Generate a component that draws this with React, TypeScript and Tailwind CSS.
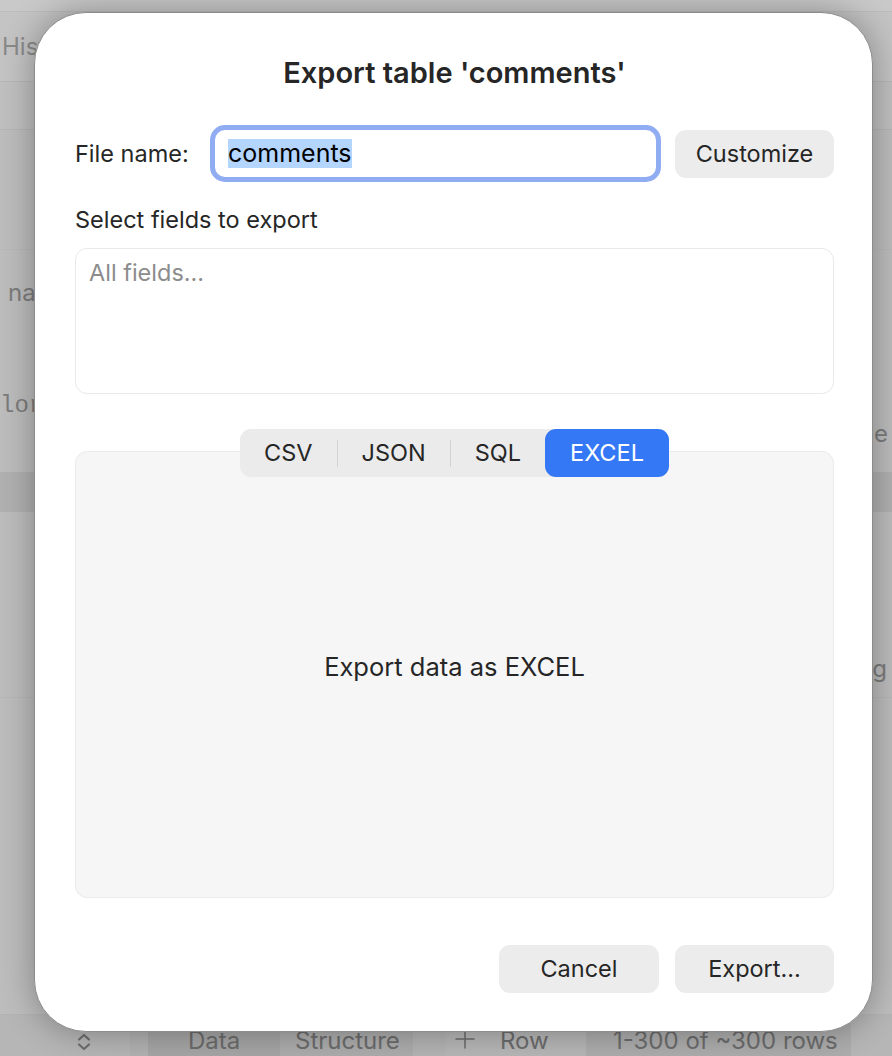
import React from 'react';

const tabs = ['CSV', 'JSON', 'SQL', 'EXCEL'];

// small up/down stepper glyph in the status bar
const UpDown = () => (
    <svg width="16" height="20" viewBox="0 0 16 20" fill="none" stroke="#6e6e6e" strokeWidth="2.2" strokeLinecap="round" strokeLinejoin="round">
        <path d="M3 7.5 8 3l5 4.5" />
        <path d="M3 12.5 8 17l5-4.5" />
    </svg>
);

const Plus = () => (
    <svg width="22" height="22" viewBox="0 0 22 22" stroke="#6e6e6e" strokeWidth="1.6" strokeLinecap="round">
        <path d="M11 2v18M2 11h18" />
    </svg>
);

const Backdrop = () => (
    <div className="flex flex-col w-full h-full bg-[#bdbdbd] text-[#8a8a8a]">
        <div className="h-[12px] bg-[#c9c9c9] border-b border-[#bcbcbc]" />
        <div className="h-[70px] flex items-center bg-[#c4c4c4] border-b border-[#b8b8b8] pl-[2px] text-[24px]">
            History
        </div>
        <div className="h-[48px] bg-[#c0c0c0] border-b border-[#b6b6b6]" />
        <div className="h-[120px] border-b border-[#b9b9b9]" />
        <div className="h-[85px] flex items-center pl-[8px] text-[24px] text-[#7c7c7c]">name</div>
        <div className="h-[137px] flex items-end justify-between text-[24px] text-[#7c7c7c]">
            <span className="font-['Liberation_Mono',monospace] pb-[48px]">lorem</span>
            <span className="pr-[4px] pb-[20px]">Type</span>
        </div>
        <div className="h-[40px] bg-[#b1b1b1]" />
        <div className="h-[186px] flex items-end justify-end pr-[5px] pb-[10px] text-[24px] text-[#7c7c7c] border-b border-[#b7b7b7]">
            String
        </div>
        <div className="flex-1 border-b border-[#b3b3b3]" />
        <div className="h-[41px] flex items-end text-[24px] leading-[30px] text-[#6c6c6c] bg-[#b6b6b6]">
            <div className="w-[130px] h-full flex items-end justify-end pr-[38px] pb-[4px]">
                <UpDown />
            </div>
            <div className="w-[18px] h-full bg-[#b2b2b2]" />
            <div className="w-[132px] h-full flex items-end pl-[40px] bg-[#a6a6a6]">Data</div>
            <div className="w-[133px] h-full flex items-end pl-[15px] bg-[#adadad]">Structure</div>
            <div className="w-[33px] h-full bg-[#b4b4b4]" />
            <div className="w-[140px] h-full flex items-end gap-[24px] pl-[8px] bg-[#b7b7b7]">
                <span className="pb-[6px]">
                    <Plus />
                </span>
                <span>Row</span>
            </div>
            <div className="w-[265px] h-full flex items-end pl-[27px] bg-[#adadad]">1-300 of ~300 rows</div>
            <div className="flex-1 h-full bg-[#b6b6b6]" />
        </div>
    </div>
);

export default function App() {
    return (
        <div className="relative w-[892px] h-[1056px] overflow-hidden font-[family-name:Inter,sans-serif]">
            <Backdrop />

            <div className="absolute left-[34px] top-[12px] w-[839px] h-[1020px] rounded-[52px] bg-white border border-[#8c8c8c] shadow-[0_0_34px_rgba(0,0,0,0.32)] flex flex-col pl-[40px] pr-[38px] text-[#262626]">
                <h1 className="pt-[43px] text-center text-[29px] leading-[34px] font-semibold">
                    Export table 'comments'
                </h1>

                <div className="mt-[35px] flex items-center h-[57px]">
                    <label className="w-[135px] text-[23.5px]">File name:</label>
                    <div className="flex-1 h-[57px] rounded-[15px] border-[5px] border-[#90acf2] flex items-center px-[13px]">
                        <span className="bg-[#b4d5fe] text-black text-[25px] leading-[29px]">comments</span>
                    </div>
                    <button className="ml-[14px] w-[159px] h-[48px] rounded-[11px] bg-[#ececec] text-[23.5px]">
                        Customize
                    </button>
                </div>

                <div className="mt-[24px] text-[23.5px] leading-[28px]">Select fields to export</div>

                <div className="mt-[14px] h-[146px] rounded-[12px] border-[1.5px] border-[#e9e9e9] px-[13px] pt-[10px] text-[23.5px] leading-[28px] text-[#8c8c8c]">
                    All fields...
                </div>

                <div className="mt-[35px] flex justify-center relative z-10">
                    <div className="flex items-center h-[48px] rounded-[11px] bg-[#ebebeb] text-[23.5px]">
                        {tabs.map((t, i) => (
                            <React.Fragment key={t}>
                                {i > 0 && i < 3 && <div className="w-px h-[27px] bg-[#d2d2d2]" />}
                                <div
                                    className={
                                        t === 'EXCEL'
                                            ? 'h-full flex items-center px-[25px] rounded-[11px] bg-[#3478f6] text-white'
                                            : 'h-full flex items-center px-[24px]'
                                    }
                                >
                                    {t}
                                </div>
                            </React.Fragment>
                        ))}
                    </div>
                </div>

                <div className="-mt-[26px] h-[447px] rounded-[12px] border border-[#ebebeb] bg-[#f6f6f6] flex items-center justify-center pb-[14px] text-[25.5px]">
                    Export data as EXCEL
                </div>

                <div className="mt-[47px] flex justify-end gap-[16px]">
                    <button className="w-[160px] h-[48px] rounded-[11px] bg-[#ececec] text-[23.5px]">Cancel</button>
                    <button className="w-[159px] h-[48px] rounded-[11px] bg-[#ececec] text-[23.5px]">Export...</button>
                </div>
            </div>
        </div>
    );
}
